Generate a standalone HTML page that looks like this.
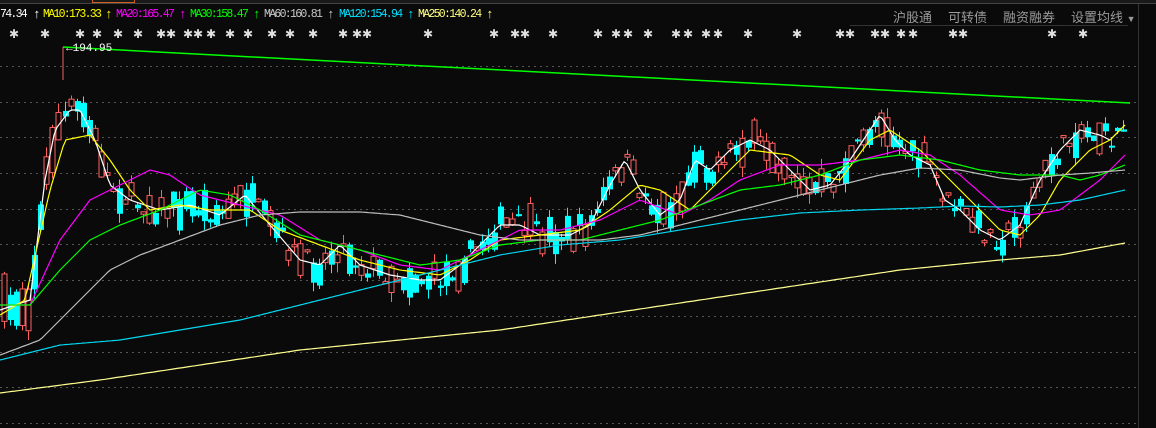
<!DOCTYPE html>
<html><head><meta charset="utf-8">
<style>
html,body{margin:0;padding:0;background:#0a0a0a;width:1156px;height:428px;overflow:hidden;position:relative;font-family:"Liberation Mono",monospace}
.t{position:absolute;top:8px;font-size:11.5px;letter-spacing:-1.7px;white-space:nowrap;line-height:13px}
.a{position:absolute;top:8px;font-size:13px;line-height:13px}
.m{position:absolute;top:7px;font-family:"Liberation Sans","Noto Sans CJK SC",sans-serif;font-size:13px;color:#9a9a9a}
</style></head><body>
<div style="position:absolute;left:0;top:0;width:1156px;height:3px;background:#1a1a1a;border-bottom:1px solid #444"></div>
<div style="position:absolute;left:92px;top:0;width:41px;height:2px;border:1px solid #d06020;border-top:none"></div>
<div style="position:absolute;left:1138px;top:4px;width:1px;height:424px;background:#333"></div>
<div style="position:absolute;left:850px;top:25px;width:278px;height:1px;background:#333"></div>

<div class="t" style="left:0;color:#fff">74.34</div><div class="a" style="left:33px;color:#fff">↑</div>
<div class="t" style="left:43px;color:#ffff00">MA10:173.33</div><div class="a" style="left:105px;color:#ffff00">↑</div>
<div class="t" style="left:116px;color:#ff00ff">MA20:165.47</div><div class="a" style="left:179px;color:#ff00ff">↑</div>
<div class="t" style="left:190px;color:#00ff00">MA30:158.47</div><div class="a" style="left:253px;color:#00ff00">↑</div>
<div class="t" style="left:264px;color:#c8c8c8">MA60:160.81</div><div class="a" style="left:327px;color:#c8c8c8">↑</div>
<div class="t" style="left:339px;color:#00e0ff">MA120:154.94</div><div class="a" style="left:407px;color:#00e0ff">↑</div>
<div class="t" style="left:418px;color:#ffff80">MA250:140.24</div><div class="a" style="left:486px;color:#ffff80">↑</div>

<div class="m" style="left:893px">沪股通</div>
<div class="m" style="left:948px">可转债</div>
<div class="m" style="left:1003px">融资融券</div>
<div class="m" style="left:1071px">设置均线 <span style="font-size:9px">▼</span></div>

<svg id="s" width="1156" height="428" style="position:absolute;left:0;top:0" xmlns="http://www.w3.org/2000/svg">
<g id="grid" stroke="#555" stroke-dasharray="2 4" stroke-width="1"></g>
<g id="stars" fill="#e0e0e0" font-size="12" font-weight="bold" font-family="DejaVu Sans,sans-serif" text-anchor="middle"></g>
<g id="candles"></g>
<g id="mas" fill="none" stroke-width="1.2"></g>
<polyline points="63,47 1130,103" stroke="#00ff00" stroke-width="1.5" fill="none"/>
<line x1="63" y1="47" x2="63" y2="80" stroke="#f06060"/>
<text x="66" y="51" fill="#fff" font-size="11" font-family="Liberation Mono,monospace">←194.95</text>
</svg>
<script>
(function(){
var NS="http://www.w3.org/2000/svg";
function el(n,a,p){var e=document.createElementNS(NS,n);for(var k in a)e.setAttribute(k,a[k]);document.getElementById(p).appendChild(e);return e;}
[66,102,137,173,209,244,280,316,352,387,423].forEach(function(y){el('line',{x1:0,y1:y+.5,x2:1138,y2:y+.5},'grid');});
var sx=[14,45,80,97,118,138,166,193,211,230,248,272,290,313,343,362,428,494,520,553,598,616,628,648,676,688,706,718,748,797,845,880,901,913,958,1052,1083];
var dbl=[166,193,362,520,845,880,958];
sx.forEach(function(x){var t=el('text',{x:x,y:38},'stars');t.textContent=(dbl.indexOf(x)>=0?'✱✱':'✱');});
function interp(pts,x){for(var i=1;i<pts.length;i++){if(x<=pts[i][0]){var a=pts[i-1],b=pts[i];return a[1]+(b[1]-a[1])*(x-a[0])/(b[0]-a[0]);}}return pts[pts.length-1][1];}
function P(s){var a=s.split(' ').map(Number),r=[];for(var i=0;i<a.length;i+=2)r.push([a[i],a[i+1]]);return r;}
var ma5=P("0 310 30 300 45 180 55 130 70 110 80 110 95 140 110 185 130 200 160 210 190 205 220 215 245 195 270 225 300 260 320 265 340 245 360 265 390 275 420 280 440 280 460 265 480 245 500 225 520 225 540 235 570 235 590 225 610 185 625 160 640 190 660 215 680 200 695 160 710 170 730 150 750 140 770 150 790 170 810 190 830 185 850 160 870 130 880 115 895 140 910 155 930 165 945 200 960 210 980 230 1000 240 1020 225 1040 180 1060 150 1080 130 1100 135 1110 140 1125 125");
var lines=[
["#ffffff",ma5],
["#ffff00",P("0 315 25 300 50 190 65 140 90 135 110 160 130 190 150 210 180 205 210 210 250 210 280 230 320 245 360 260 400 270 440 275 470 260 500 240 540 235 580 230 610 210 640 185 660 190 690 210 720 180 750 150 790 155 820 175 840 180 870 140 890 130 920 150 940 170 970 200 1000 230 1020 235 1040 215 1060 180 1090 150 1110 140 1125 125")],
["#ff00ff",P("0 305 30 305 60 240 90 200 120 185 150 170 170 175 200 195 240 205 280 215 320 240 360 250 400 265 440 270 480 250 520 230 560 230 600 220 640 200 680 215 710 200 740 180 780 165 820 165 860 160 900 150 930 155 960 175 1000 210 1030 215 1060 210 1080 195 1100 180 1125 155")],
["#00ff00",P("0 305 30 305 60 270 90 240 120 225 160 210 200 190 230 195 260 210 300 235 340 245 380 255 420 265 460 260 500 245 540 240 580 240 620 230 660 220 700 205 740 190 780 185 820 175 860 160 900 155 940 160 980 170 1020 175 1060 175 1080 180 1100 175 1125 165")],
["#bdbdbd",P("0 355 40 340 80 300 110 270 140 255 180 240 220 225 260 215 300 212 360 212 400 215 440 225 480 235 520 240 560 240 600 240 640 235 680 225 720 215 760 205 800 195 840 185 880 175 920 168 960 170 1000 178 1020 180 1060 175 1090 173 1125 170")],
["#00d8f0",P("0 360 60 345 120 340 180 330 240 320 300 305 360 290 420 275 460 265 500 255 560 245 620 240 680 230 740 220 800 213 860 210 920 208 960 206 1000 207 1040 205 1080 200 1125 190")],
["#ffff90",P("0 393 100 380 200 365 300 350 400 340 500 330 600 315 700 300 800 285 900 270 1000 260 1060 255 1125 243")]];
var seed=7;function rnd(){seed=(seed*16807)%2147483647;return seed/2147483647;}
for(var i=0;i<186;i++){var x=Math.round(4+i*6.05);var c=interp(ma5,x)+(rnd()-0.5)*22;var h=2+Math.pow(rnd(),2)*30;var up=rnd()<0.5;
if(x<60){h+=20;}
var bt=c-h/2,bb=c+h/2;var wt=bt-rnd()*10,wb=bb+rnd()*10;
if(up){el('line',{x1:x+.5,y1:wt,x2:x+.5,y2:wb,stroke:'#ff6060'},'candles');el('rect',{x:x-2,y:bt,width:5,height:h,fill:'#0a0a0a',stroke:'#ff6060'},'candles');}
else{el('line',{x1:x+.5,y1:wt,x2:x+.5,y2:wb,stroke:'#00ffff'},'candles');el('rect',{x:x-2,y:bt,width:6,height:h,fill:'#00ffff'},'candles');}}
lines.forEach(function(l){var pts=[];for(var x=0;x<=1125;x+=3)pts.push(x+','+interp(l[1],x).toFixed(1));el('polyline',{points:pts.join(' '),stroke:l[0]},'mas');});
})();
</script>
</body></html>
